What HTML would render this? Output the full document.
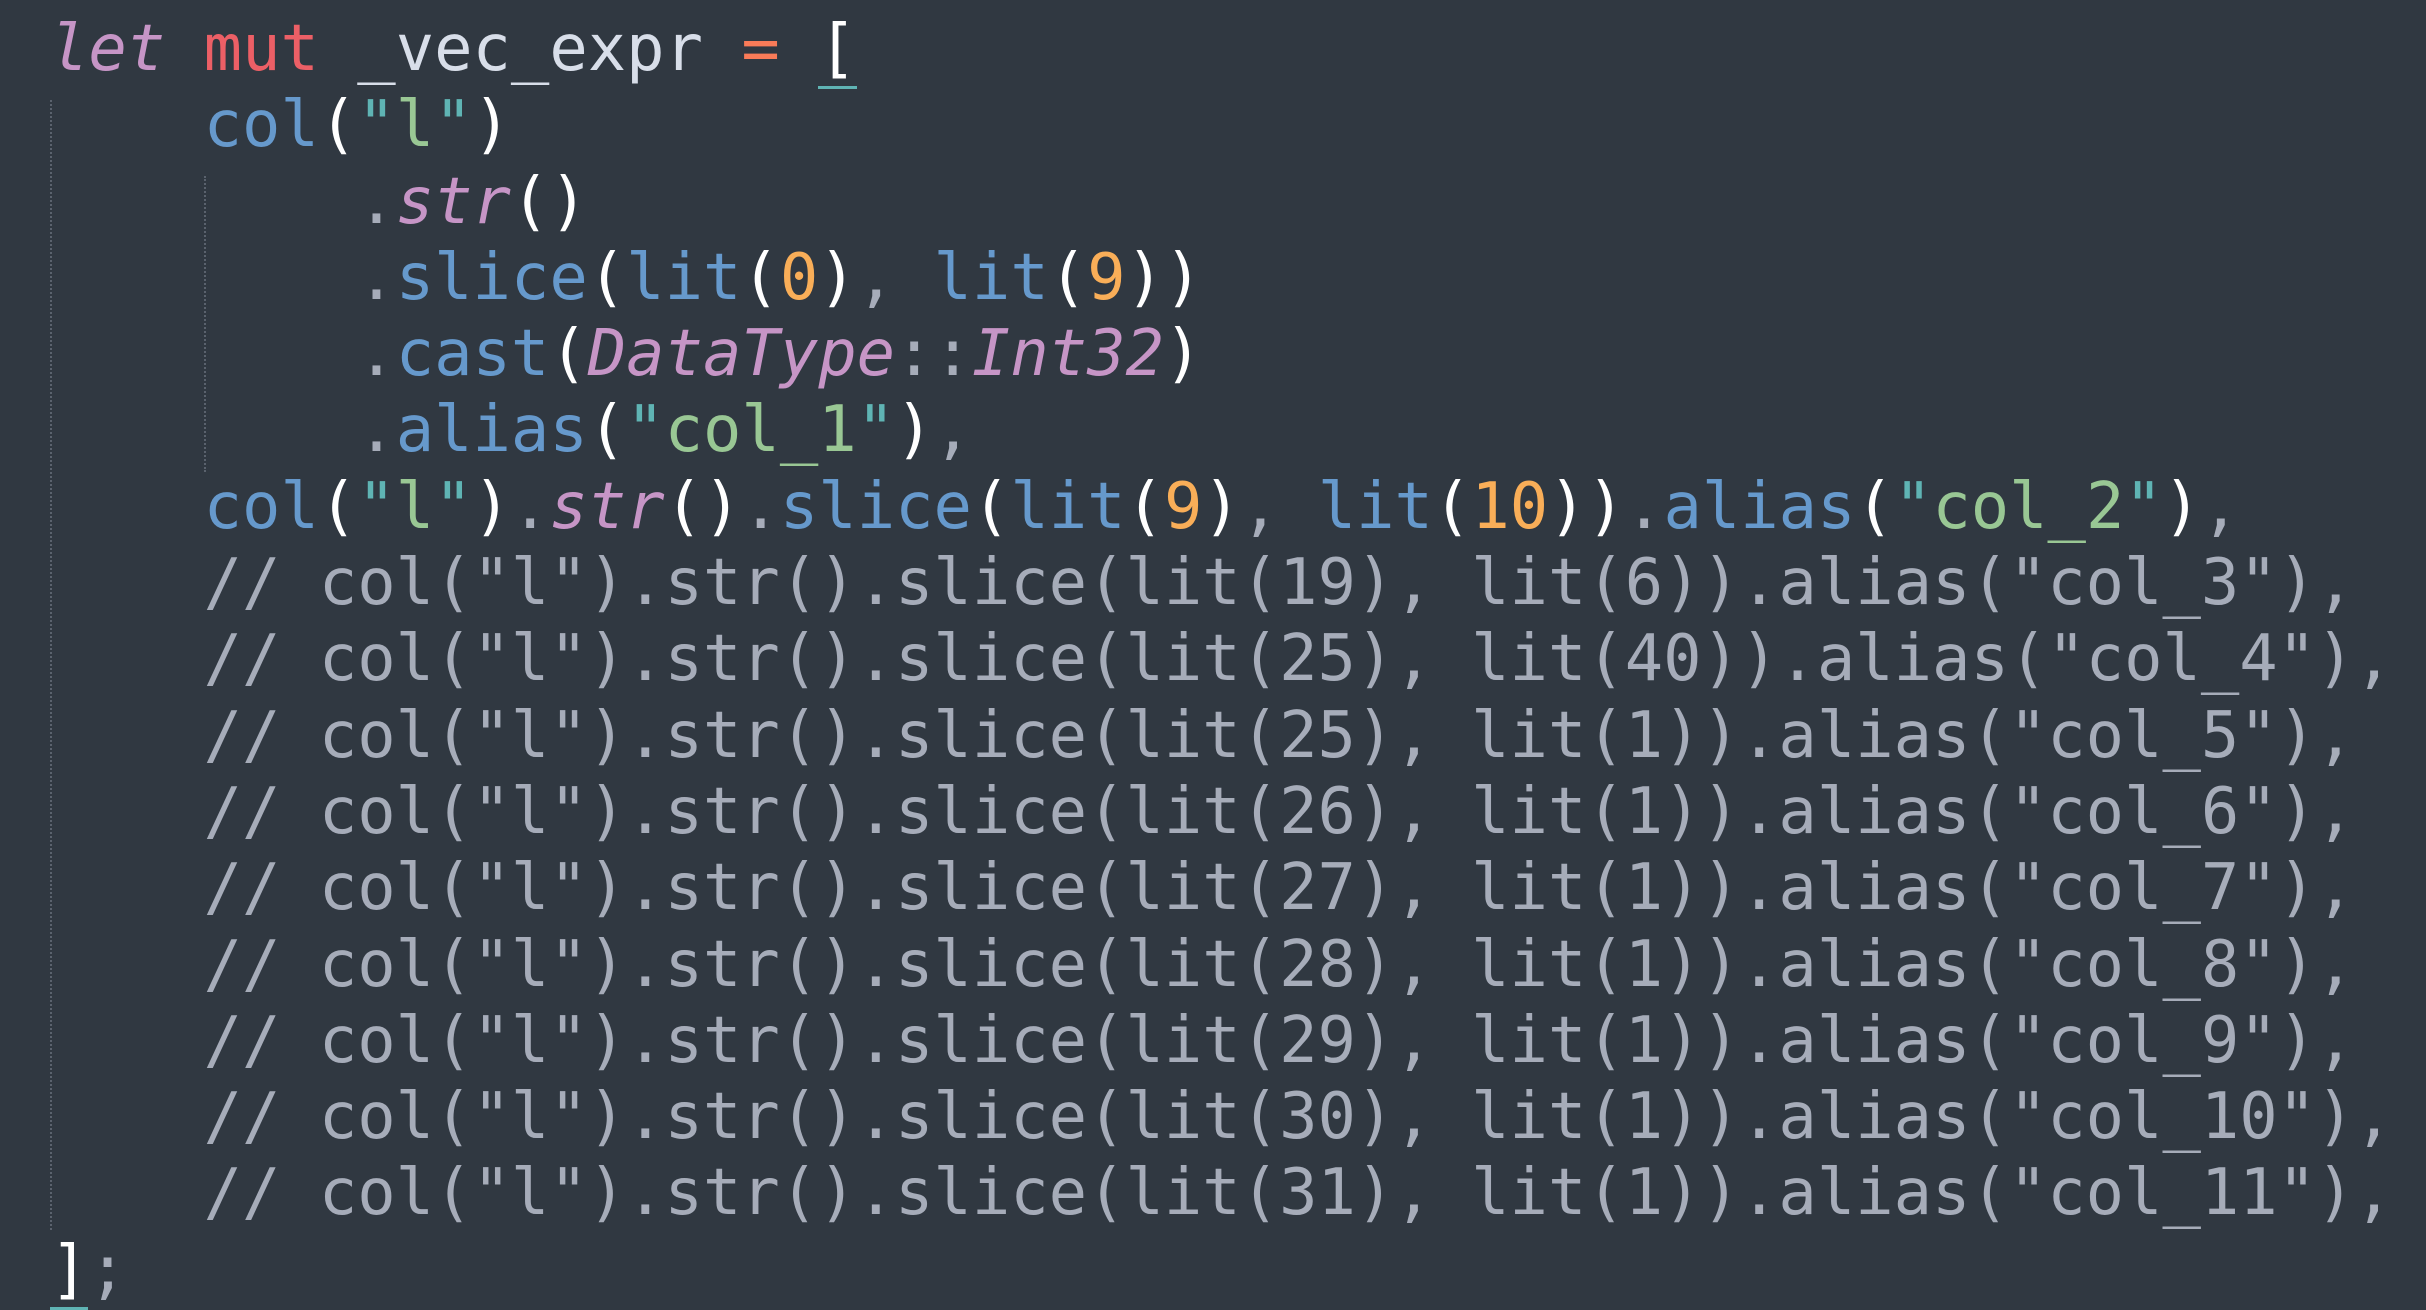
<!DOCTYPE html>
<html><head><meta charset="utf-8"><style>
html,body{margin:0;padding:0;background:#303841;width:2426px;height:1310px;overflow:hidden}
pre{position:absolute;left:50px;top:11px;margin:0;font-family:"DejaVu Sans Mono","Liberation Mono",monospace;font-size:63.8px;line-height:76.3px;color:#d8dee9;white-space:pre}
.k{color:#c695c6;font-style:italic}
.m{color:#ec5f66}
.o{color:#f97b58}
.f{color:#6699cc}
.s{color:#99c794}
.q{color:#5fb4b4}
.n{color:#f9ae58}
.p{color:#ffffff}
.d{color:#a6acb9}
.c{color:#a6acb9}
.u{border-bottom:3px solid #5fb4b4}
.g{position:absolute;border-left:2px dotted #5a626d}
</style></head><body>
<div class="g" style="left:50px;top:100px;height:1130px"></div>
<div class="g" style="left:204px;top:176px;height:296px"></div>
<pre><span class="k">let</span> <span class="m">mut</span> _vec_expr <span class="o">=</span> <span class="p u">[</span>
    <span class="f">col</span><span class="p">(</span><span class="q">"</span><span class="s">l</span><span class="q">"</span><span class="p">)</span>
        <span class="d">.</span><span class="k">str</span><span class="p">()</span>
        <span class="d">.</span><span class="f">slice</span><span class="p">(</span><span class="f">lit</span><span class="p">(</span><span class="n">0</span><span class="p">)</span><span class="d">,</span> <span class="f">lit</span><span class="p">(</span><span class="n">9</span><span class="p">))</span>
        <span class="d">.</span><span class="f">cast</span><span class="p">(</span><span class="k">DataType</span><span class="d">::</span><span class="k">Int32</span><span class="p">)</span>
        <span class="d">.</span><span class="f">alias</span><span class="p">(</span><span class="q">"</span><span class="s">col_1</span><span class="q">"</span><span class="p">)</span><span class="d">,</span>
    <span class="f">col</span><span class="p">(</span><span class="q">"</span><span class="s">l</span><span class="q">"</span><span class="p">)</span><span class="d">.</span><span class="k">str</span><span class="p">()</span><span class="d">.</span><span class="f">slice</span><span class="p">(</span><span class="f">lit</span><span class="p">(</span><span class="n">9</span><span class="p">)</span><span class="d">,</span> <span class="f">lit</span><span class="p">(</span><span class="n">10</span><span class="p">))</span><span class="d">.</span><span class="f">alias</span><span class="p">(</span><span class="q">"</span><span class="s">col_2</span><span class="q">"</span><span class="p">)</span><span class="d">,</span>
<span class="c">    // col("l").str().slice(lit(19), lit(6)).alias("col_3"),
    // col("l").str().slice(lit(25), lit(40)).alias("col_4"),
    // col("l").str().slice(lit(25), lit(1)).alias("col_5"),
    // col("l").str().slice(lit(26), lit(1)).alias("col_6"),
    // col("l").str().slice(lit(27), lit(1)).alias("col_7"),
    // col("l").str().slice(lit(28), lit(1)).alias("col_8"),
    // col("l").str().slice(lit(29), lit(1)).alias("col_9"),
    // col("l").str().slice(lit(30), lit(1)).alias("col_10"),
    // col("l").str().slice(lit(31), lit(1)).alias("col_11"),</span>
<span class="p u">]</span><span class="d">;</span></pre>
</body></html>
